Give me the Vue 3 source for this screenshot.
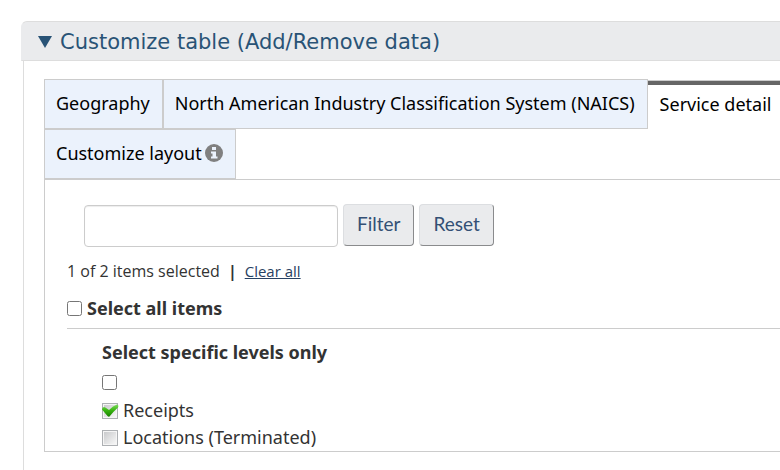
<script setup>
import { ref } from 'vue'

const tabs = [
  { id: 'geography', label: 'Geography' },
  { id: 'naics', label: 'North American Industry Classification System (NAICS)' },
  { id: 'service', label: 'Service detail' },
  { id: 'layout', label: 'Customize layout', info: true }
]
const activeTab = ref('service')
const filterText = ref('')
const allSelected = ref(false)
const levelSelected = ref(false)
const items = ref([
  { id: 'receipts', label: 'Receipts', checked: true },
  { id: 'locations', label: 'Locations (Terminated)', checked: false }
])

function clearAll() {
  items.value.forEach((item) => { item.checked = false })
}
</script>

<template>
  <main class="page">
    <details class="customize" open>
      <summary class="heading">
        <svg class="marker" viewBox="0 0 14 12" aria-hidden="true"><path d="M0 0H14L7 12Z" /></svg>
        <span>Customize table (Add/Remove data)</span>
      </summary>
      <div class="body">
        <div class="tabs" role="tablist">
          <button
            v-for="tab in tabs"
            :key="tab.id"
            type="button"
            role="tab"
            class="tab"
            :class="{ active: tab.id === activeTab }"
            :aria-selected="tab.id === activeTab"
            @click="activeTab = tab.id"
          >
            <span>{{ tab.label }}</span>
            <svg v-if="tab.info" class="info" viewBox="0 0 18 18" aria-hidden="true">
              <circle cx="9" cy="9" r="9" />
              <path d="M7 3h4v3H7zM6 7.5h5v5h1.500v2h-6.500v-2h1.500v-3h-1.500z" />
            </svg>
          </button>
        </div>

        <section class="panel">
          <form class="filter" @submit.prevent>
            <input v-model="filterText" class="filter-input" type="text" aria-label="Filter items">
            <div class="actions">
              <button class="btn" type="submit">Filter</button>
              <button class="btn" type="reset" @click="filterText = ''">Reset</button>
            </div>
          </form>

          <p class="status">
            <span>1 of 2 items selected</span>
            <span class="bar">|</span>
            <a href="#" @click.prevent="clearAll">Clear all</a>
          </p>

          <div class="select-all">
            <input id="select-all" v-model="allSelected" class="box" type="checkbox">
            <label for="select-all">Select all items</label>
          </div>

          <div class="levels">
            <h2 class="levels-title">Select specific levels only</h2>
            <div class="level">
              <input v-model="levelSelected" class="box" type="checkbox" aria-label="Level 1">
            </div>
            <ul class="items">
              <li v-for="item in items" :key="item.id">
                <label class="item">
                  <span class="tick">
                    <input v-model="item.checked" type="checkbox">
                    <svg viewBox="0 0 18 17" aria-hidden="true">
                      <defs>
                        <linearGradient :id="'face-' + item.id" x1="0" y1="0" x2="1" y2="1">
                          <stop offset="0" stop-color="#c9cacc" />
                          <stop offset="1" stop-color="#f7f7f7" />
                        </linearGradient>
                        <linearGradient :id="'leaf-' + item.id" x1="0" y1="0" x2="0" y2="1">
                          <stop offset="0" stop-color="#7bdb5a" />
                          <stop offset="0.5" stop-color="#37b310" />
                          <stop offset="1" stop-color="#188000" />
                        </linearGradient>
                      </defs>
                      <rect x="1.500" y="1.500" width="15" height="15" fill="#f5f5f5" stroke="#adb0b3" />
                      <rect x="3" y="3" width="12" height="12" :fill="`url(#face-${item.id})`" />
                      <path
                        v-if="item.checked"
                        d="M1 7.500Q1 5 3 5Q4 5 8 8Q12 3.500 16 2.500Q18 3 17 5.500Q13 9 8.500 14.500Q7.500 15 6.500 14Z"
                        :fill="`url(#leaf-${item.id})`"
                      />
                    </svg>
                  </span>
                  <span>{{ item.label }}</span>
                </label>
              </li>
            </ul>
          </div>
        </section>
      </div>
    </details>
  </main>
</template>

<style>
body {
  margin: 0;
  background: #fff;
}
</style>

<style scoped>
* {
  box-sizing: border-box;
}
.page {
  min-height: 100vh;
  padding: 21px 0 0 21px;
  overflow: hidden;
  display: grid;
  font-family: "Noto Sans", sans-serif;
  font-size: 18px;
  color: #333;
}
/* The widget bleeds past the right edge of the window. */
.customize {
  margin-right: -48px;
}
.heading {
  display: flex;
  align-items: center;
  gap: 8px;
  height: 40px;
  padding: 1px 16px 0;
  border: 1px solid #ddd;
  border-left-color: #eaebed;
  border-radius: 6px 6px 0 0;
  background: #eaebed;
  color: #295376;
  font-family: "DejaVu Sans", sans-serif;
  font-size: 21px;
  line-height: 38px;
  list-style: none;
  cursor: pointer;
}
.marker {
  width: 14px;
  height: 12px;
  fill: #295376;
}
.body {
  margin-left: 2px;
  padding: 18px 20px;
  border-left: 1px solid #ddd;
}
.tabs {
  display: flex;
  flex-wrap: wrap;
}
.tab {
  display: flex;
  align-items: center;
  gap: 3px;
  height: 50px;
  padding: 0 12px 2px 11px;
  border: 1px solid #ccc;
  border-radius: 0;
  background: #ebf2fc;
  color: #000;
  font: inherit;
  cursor: pointer;
}
.tab.active {
  margin-top: 1px;
  height: 49px;
  border-width: 1px 0 0;
  box-shadow: inset 0 4px #666;
  padding: 0 12px 2px;
  background: #fff;
}
.info {
  width: 18px;
  height: 18px;
  fill: #808080;
}
.info path {
  fill: #ebf2fc;
}
.panel {
  padding: 24px 22px 0;
  border: 1px solid #ccc;
}
.filter {
  display: flex;
  align-items: flex-end;
  gap: 5px;
  height: 43px;
  padding-left: 17px;
}
.filter-input {
  width: 254px;
  height: 42px;
  padding: 6px 12px;
  border: 1px solid #ccc;
  border-radius: 4px;
  box-shadow: inset 0 1px 1px rgba(0, 0, 0, 0.075);
  font: inherit;
}
.actions {
  display: flex;
  align-self: flex-start;
  gap: 5px;
}
.btn {
  height: 42px;
  padding: 0 13px 3px;
  border: 1px solid #dcdee1;
  border-right-color: #8a8b8d;
  border-bottom-color: #8a8b8d;
  border-radius: 4px;
  background: #eaebed;
  color: #335075;
  font-family: Lato, sans-serif;
  font-size: 19px;
}
.status {
  display: flex;
  gap: 8px;
  margin: 13px 0 0;
  font-family: "Open Sans", sans-serif;
  font-size: 16px;
  line-height: 22px;
}
.bar {
  font-weight: bold;
}
.status a {
  color: #284162;
  font-size: 15px;
}
.select-all {
  display: flex;
  align-items: center;
  gap: 5px;
  height: 47px;
  border-bottom: 1px solid #ccc;
  padding-top: 6px;
  font-weight: bold;
}
.box {
  width: 15px;
  height: 15px;
  margin: 0;
}
.levels {
  padding: 11px 0 0 35px;
}
.levels-title {
  margin: 0;
  font-size: 18px;
  line-height: 24px;
}
.level {
  display: flex;
  align-items: center;
  height: 33px;
  padding-top: 4px;
}
.items {
  margin: 0;
  padding: 0;
  list-style: none;
}
.item {
  display: flex;
  align-items: center;
  gap: 4px;
  margin-left: -1px;
  line-height: 27px;
}
.tick {
  display: grid;
}
.tick > * {
  grid-area: 1 / 1;
  width: 18px;
  height: 17px;
  margin: 0;
}
.tick input {
  opacity: 0;
}
.tick svg {
  pointer-events: none;
}
</style>
